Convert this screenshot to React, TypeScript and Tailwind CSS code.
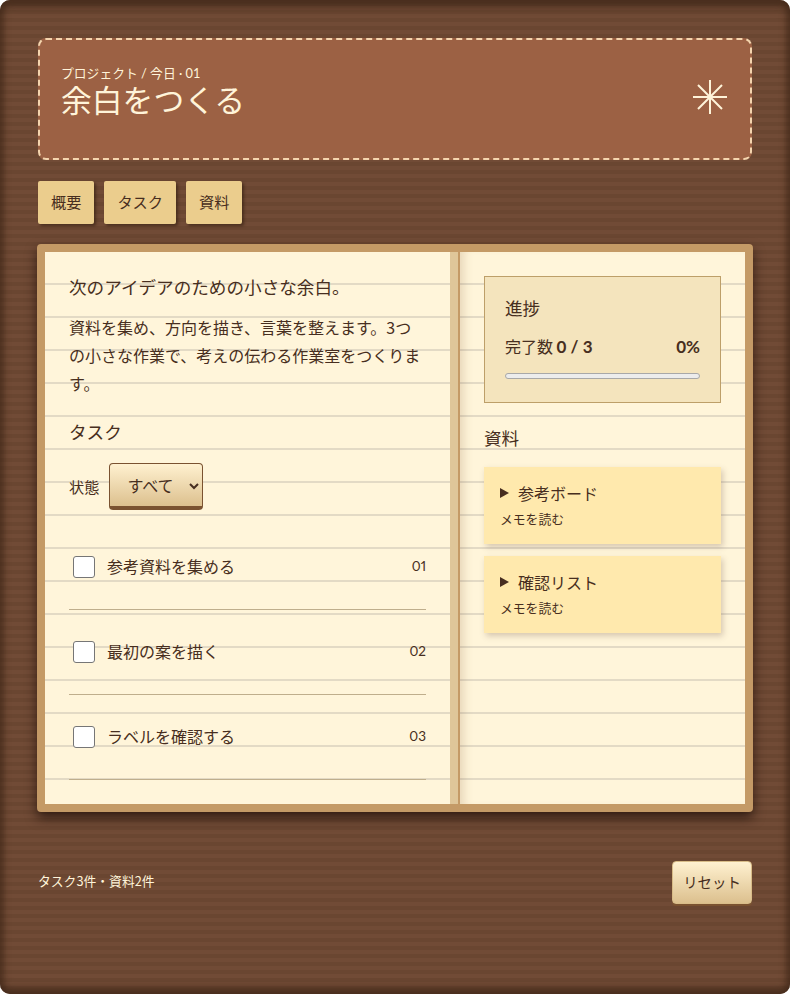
import React from "react";

const sans = "font-['Noto_Sans_CJK_JP','Noto_Sans',sans-serif]";

function Task({ label, num }: { label: string; num: string }) {
  return (
    <li className="flex items-center h-[85px] border-b border-[#bfae8c] pl-1">
      <span className="block w-[22px] h-[22px] rounded-[3px] bg-white border border-[#767676] mr-3 shrink-0" />
      <span className="flex-1 text-[16px] pb-[2px] text-[#472e20]">{label}</span>
      <span className="text-[13.5px] pb-[2px] proportional-nums text-[#472e20] font-['Lato','Noto_Sans',sans-serif]">{num}</span>
    </li>
  );
}

function Note({ title }: { title: string }) {
  return (
    <div className="bg-[#ffe9ad] h-[77px] px-4 pt-[15px] shadow-[2px_3px_6px_rgba(92,64,51,0.25)]">
      <div className="flex items-center text-[16px] leading-[22px] text-[#472e20]">
        <span className="w-0 h-0 border-y-[5px] border-y-transparent border-l-[9px] border-l-[#472e20] mr-[9px]" />
        {title}
      </div>
      <div className="text-[12.8px] leading-[18px] mt-[6px] text-[#472e20]">メモを読む</div>
    </div>
  );
}

export default function App() {
  return (
    <div className={`${sans} w-[790px] h-[994px] bg-white`}>
      <div className="relative w-[790px] h-[994px] rounded-[10px] overflow-hidden p-[38px] bg-[repeating-linear-gradient(0deg,#714b36_0px,#714b36_4px,#6a4631_4px,#6a4631_8px)] shadow-[inset_0_0_6px_4px_rgba(62,38,24,0.6),inset_0_12px_8px_-4px_rgba(62,38,24,0.5),inset_0_-10px_8px_-4px_rgba(62,38,24,0.5)]">
        <header className="h-[122px] rounded-[8px] border-2 border-dashed border-[#f5d5ae] bg-[#9c6144] pl-[21px] pr-[23px] pt-[24px] flex justify-between">
          <div>
            <div className="text-[12.8px] leading-[18px] text-[#fff4da] font-['Lato','Noto_Sans_CJK_JP',sans-serif]">プロジェクト / 今日 · 01</div>
            <h1 className="text-[30.8px] leading-[36px] -mt-[1px] text-[#fff4da]">余白をつくる</h1>
          </div>
          <svg width="34" height="34" viewBox="0 0 34 34" className="mt-[16px]" stroke="#fff4da" strokeWidth="2">
            <path d="M17 0V34M0 17H34M5 5L29 29M29 5L5 29" />
          </svg>
        </header>

        <nav className="flex gap-[10px] mt-[21px]">
          {["概要", "タスク", "資料"].map((t) => (
            <button key={t} className="h-[43px] px-[13px] pb-[2px] rounded-[2px] bg-[#ebcd8d] text-[15.2px] text-[#472e20] shadow-[2px_2px_3px_rgba(50,30,15,0.6)]">
              {t}
            </button>
          ))}
        </nav>

        <main className="-mx-[1px] mt-[20px] h-[568px] rounded-[4px] border-[8px] border-[#c49a66] flex bg-[#fff5da] shadow-[0_6px_12px_rgba(25,12,5,0.7)]">
          <section className="w-[405px] h-full px-[24px] pt-[21px] bg-[repeating-linear-gradient(180deg,#fff5da_0px,#fff5da_31px,#e3dac5_31px,#e3dac5_33px)]">
            <p className="text-[17.6px] leading-[28px] text-[#472e20]">次のアイデアのための小さな余白。</p>
            <p className="text-[16px] leading-[28px] mt-[12px] text-[#472e20]">
              資料を集め、方向を描き、言葉を整えます。3つの小さな作業で、考えの伝わる作業室をつくります。
            </p>
            <h2 className="text-[17.6px] leading-[26px] mt-[22px] text-[#472e20]">タスク</h2>
            <div className="flex items-center mt-[18px] gap-[10px] text-[15.2px] text-[#472e20]">
              <span>状態</span>
              <select className="w-[94px] h-[47px] pl-[13px] text-[16px] rounded-[4px] border border-[#7a5230] border-b-[4px] text-[#472e20] bg-[linear-gradient(180deg,#fff1d0,#dcc08e)]">
                <option>すべて</option>
              </select>
            </div>
            <ul className="mt-[15px]">
              <Task label="参考資料を集める" num="01" />
              <Task label="最初の案を描く" num="02" />
              <Task label="ラベルを確認する" num="03" />
            </ul>
          </section>
          <div className="w-[10px] h-full bg-[#dfc699] border-r-[2px] border-r-[#c49a66]" />
          <aside className="flex-1 h-full px-[24px] pt-[24px] bg-[repeating-linear-gradient(180deg,#fff5da_0px,#fff5da_31px,#e3dac5_31px,#e3dac5_33px)] shadow-[inset_10px_0_10px_-6px_rgba(120,80,40,0.18)]">
            <div className="h-[127px] border border-[#bd9f69] bg-[#f4e4bd] px-[20px] pt-[17px] text-[#472e20]">
              <h2 className="text-[17.6px] leading-[28px]">進捗</h2>
              <div className="flex justify-between items-center mt-[14px] text-[16px] leading-[20px]">
                <span>完了数 <b className="font-['Lato',sans-serif] font-bold text-[17px]">0 / 3</b></span>
                <b className="font-['Lato',sans-serif] font-bold text-[17px]">0%</b>
              </div>
              <div className="h-[6px] rounded-full mt-[16px] bg-[#ececec] border border-[#a8a8a8]" />
            </div>
            <h2 className="text-[17.6px] leading-[26px] mt-[22px] text-[#472e20]">資料</h2>
            <div className="mt-[16px] flex flex-col gap-[12px]">
              <Note title="参考ボード" />
              <Note title="確認リスト" />
            </div>
          </aside>
        </main>

        <footer className="flex justify-between items-center mt-[49px]">
          <span className="text-[12.8px] pb-[4px] text-[#fff4da]">タスク3件・資料2件</span>
          <button className="w-[80px] h-[43px] rounded-[4px] pb-[2px] border border-[#d8bc88] text-[14.4px] text-[#472e20] bg-[linear-gradient(180deg,#fff1d0,#dcc08e)] shadow-[0_2px_0_#7a5230]">
            リセット
          </button>
        </footer>
      </div>
    </div>
  );
}
